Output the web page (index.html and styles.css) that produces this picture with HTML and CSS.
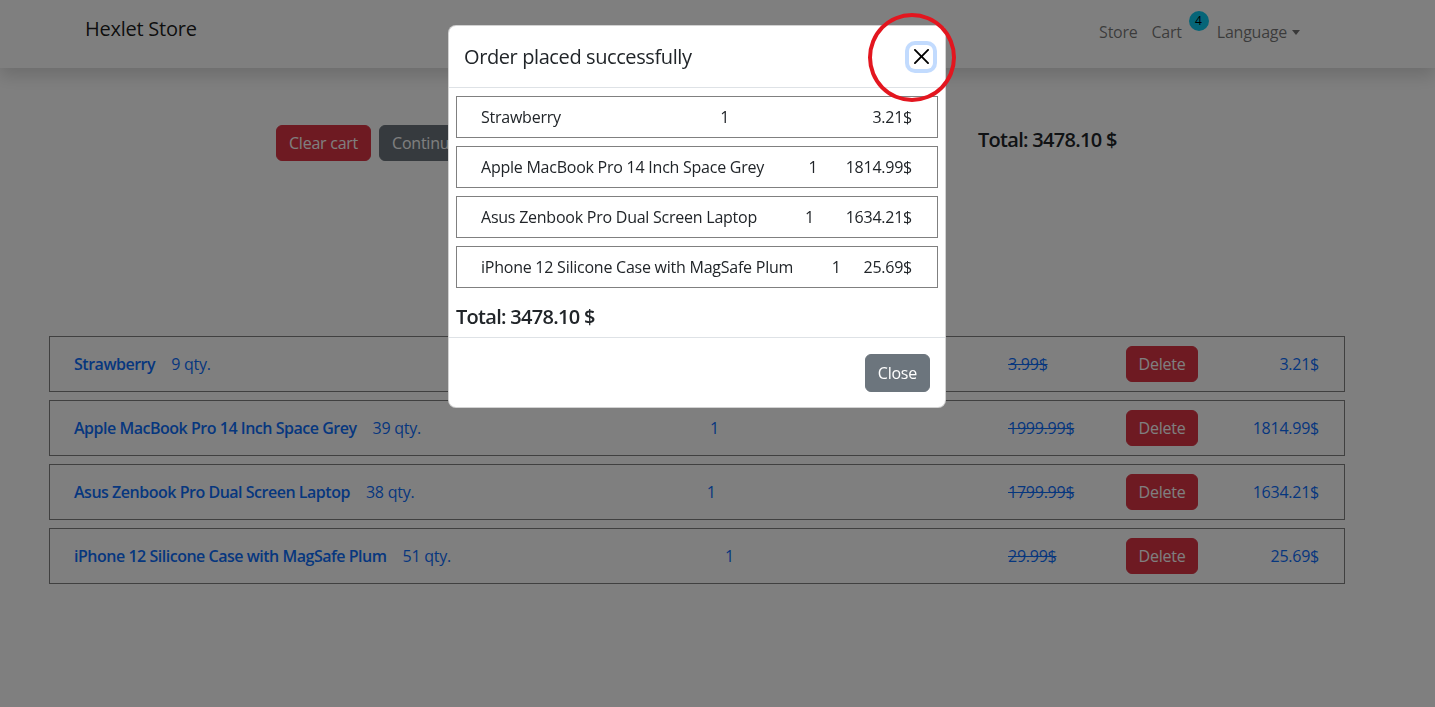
FILE: index.html
```html
<!DOCTYPE html>
<html lang="en">
<head>
<meta charset="utf-8">
<title>Hexlet Store</title>
<link rel="stylesheet" href="styles.css">
</head>
<body>
<nav class="navbar">
  <a class="brand" href="#">Hexlet Store</a>
  <ul class="nav">
    <li class="store-item"><a class="nav-link" href="#">Store</a></li>
    <li class="cart-item"><a class="nav-link" href="#">Cart</a><span class="badge">4</span></li>
    <li><a class="nav-link dropdown" href="#">Language</a></li>
  </ul>
</nav>

<main class="page">
  <div class="toolbar">
    <div class="actions">
      <button class="btn btn-danger">Clear cart</button>
      <button class="btn btn-secondary">Continue shopping</button>
    </div>
    <h5 class="total">Total: 3478.10 $</h5>
  </div>

  <div class="cart-list">
    <a class="cart-row" href="#">
      <span class="item-info"><span class="item-name">Strawberry</span><span class="item-stock">9 qty.</span></span>
      <span class="item-count">1</span>
      <span class="item-prices"><s class="old-price">3.99$</s><span class="btn btn-danger btn-delete">Delete</span><span class="new-price">3.21$</span></span>
    </a>
    <a class="cart-row" href="#">
      <span class="item-info"><span class="item-name">Apple MacBook Pro 14 Inch Space Grey</span><span class="item-stock">39 qty.</span></span>
      <span class="item-count">1</span>
      <span class="item-prices"><s class="old-price">1999.99$</s><span class="btn btn-danger btn-delete">Delete</span><span class="new-price">1814.99$</span></span>
    </a>
    <a class="cart-row" href="#">
      <span class="item-info"><span class="item-name">Asus Zenbook Pro Dual Screen Laptop</span><span class="item-stock">38 qty.</span></span>
      <span class="item-count">1</span>
      <span class="item-prices"><s class="old-price">1799.99$</s><span class="btn btn-danger btn-delete">Delete</span><span class="new-price">1634.21$</span></span>
    </a>
    <a class="cart-row" href="#">
      <span class="item-info"><span class="item-name">iPhone 12 Silicone Case with MagSafe Plum</span><span class="item-stock">51 qty.</span></span>
      <span class="item-count">1</span>
      <span class="item-prices"><s class="old-price">29.99$</s><span class="btn btn-danger btn-delete">Delete</span><span class="new-price">25.69$</span></span>
    </a>
  </div>
</main>

<div class="backdrop"></div>

<div class="modal">
  <div class="modal-header">
    <h5 class="modal-title">Order placed successfully</h5>
    <button class="btn-close" aria-label="Close">
      <svg viewBox="0 0 16 16" width="16" height="16"><path d="M.293.293a1 1 0 0 1 1.414 0L8 6.586 14.293.293a1 1 0 1 1 1.414 1.414L9.414 8l6.293 6.293a1 1 0 0 1-1.414 1.414L8 9.414l-6.293 6.293a1 1 0 0 1-1.414-1.414L6.586 8 .293 1.707a1 1 0 0 1 0-1.414z" fill="#000"/></svg>
    </button>
  </div>
  <div class="modal-body">
    <ul class="order-list">
      <li class="order-item"><span class="order-name">Strawberry</span><span class="order-count">1</span><span class="order-price">3.21$</span></li>
      <li class="order-item"><span class="order-name">Apple MacBook Pro 14 Inch Space Grey</span><span class="order-count">1</span><span class="order-price">1814.99$</span></li>
      <li class="order-item"><span class="order-name">Asus Zenbook Pro Dual Screen Laptop</span><span class="order-count">1</span><span class="order-price">1634.21$</span></li>
      <li class="order-item"><span class="order-name">iPhone 12 Silicone Case with MagSafe Plum</span><span class="order-count">1</span><span class="order-price">25.69$</span></li>
    </ul>
    <h5 class="modal-total">Total: 3478.10 $</h5>
  </div>
  <div class="modal-footer">
    <button class="btn btn-secondary btn-close-text">Close</button>
  </div>
</div>

<div class="annotation"></div>
</body>
</html>
```
FILE: styles.css
```css
* { box-sizing: border-box; }

html, body {
  margin: 0;
  height: 100%;
}

body {
  font-family: "Open Sans", "Noto Sans", "Liberation Sans", sans-serif;
  font-size: 16px;
  line-height: 1.5;
  letter-spacing: -0.015em;
  color: #212529;
  background: #fff;
  overflow: hidden;
}

/* Navbar */
.navbar {
  height: 68px;
  display: flex;
  justify-content: space-between;
  align-items: flex-start;
  padding: 14px 127px 0 85px;
  background: #fff;
  box-shadow: 0 8px 16px rgba(0, 0, 0, 0.15);
}

.brand {
  font-size: 20px;
  line-height: 30px;
  color: rgba(0, 0, 0, 0.9);
  text-decoration: none;
}

.nav {
  list-style: none;
  margin: 6px 0 0;
  padding: 0;
  display: flex;
}

.nav li { position: relative; }

.nav-link {
  display: block;
  padding: 0 8px;
  line-height: 24px;
  color: rgba(0, 0, 0, 0.55);
  text-decoration: none;
}

.store-item .nav-link { padding-right: 6px; }

.cart-item { margin-right: 19px; }

.badge {
  position: absolute;
  left: 45px;
  top: -9px;
  width: 20px;
  height: 20px;
  border-radius: 50%;
  background: #0dcaf0;
  color: #000;
  font-size: 12px;
  line-height: 20px;
  text-align: center;
  letter-spacing: 0;
}

.dropdown::after {
  content: "";
  display: inline-block;
  margin-left: 5px;
  vertical-align: 3px;
  border-top: 5px solid;
  border-left: 4px solid transparent;
  border-right: 4px solid transparent;
}

/* Page */
.page {
  padding: 57px 90px 0 49px;
}

.toolbar {
  display: flex;
  align-items: flex-start;
  margin-left: 227px;
  height: 36px;
}

.actions {
  display: flex;
  gap: 8px;
  width: 702px;
}

.btn {
  display: inline-flex;
  align-items: center;
  justify-content: center;
  height: 36px;
  padding: 0 12px;
  border: 1px solid transparent;
  border-radius: 6px;
  font-family: inherit;
  font-size: 16px;
  letter-spacing: -0.015em;
  color: #fff;
  cursor: pointer;
}

.btn-danger { background: #dc3545; border-color: #dc3545; }
.btn-secondary { background: #6c757d; border-color: #6c757d; }

.total, .modal-total {
  margin: 0;
  font-size: 20px;
  font-weight: 600;
  line-height: 24px;
  letter-spacing: -0.035em;
}

.total { margin-top: 3px; }

.cart-list {
  margin-top: 175px;
  display: flex;
  flex-direction: column;
  gap: 8px;
}

.cart-row {
  display: flex;
  justify-content: space-between;
  align-items: center;
  height: 56px;
  padding: 0 25px 0 24px;
  border: 1px solid #808080;
  color: #0d6efd;
  text-decoration: none;
}

.item-name {
  font-weight: 600;
  letter-spacing: -0.03em;
}

.item-stock { margin-left: 16px; }

.item-prices {
  display: flex;
  align-items: center;
}

.old-price { width: 118px; }

.btn-delete { width: 72px; }

.new-price {
  width: 121px;
  text-align: right;
}

/* Overlay */
.backdrop {
  position: fixed;
  inset: 0;
  background: rgba(0, 0, 0, 0.5);
}

.modal {
  position: absolute;
  left: 448px;
  top: 25px;
  width: 498px;
  background: #fff;
  border-radius: 8px;
  border: 1px solid rgba(0, 0, 0, 0.175);
}

.modal-header {
  display: flex;
  align-items: center;
  justify-content: space-between;
  height: 62px;
  padding: 0 12px 0 15px;
  border-bottom: 1px solid #dee2e6;
}

.modal-title {
  margin: 0;
  font-size: 20px;
  font-weight: 400;
  line-height: 30px;
  letter-spacing: -0.02em;
}

.btn-close {
  width: 24px;
  height: 24px;
  padding: 0;
  border: 0;
  border-radius: 6px;
  background: #fff;
  box-shadow: 0 0 0 4px rgba(13, 110, 253, 0.25);
  display: flex;
  align-items: center;
  justify-content: center;
}

.btn-close svg { width: 15px; height: 15px; }

.modal-body {
  padding: 8px 7px;
  height: 249px;
}

.order-list {
  list-style: none;
  margin: 0;
  padding: 0;
  display: flex;
  flex-direction: column;
  gap: 8px;
}

.order-item {
  display: flex;
  justify-content: space-between;
  align-items: center;
  height: 42px;
  padding: 0 25px 0 24px;
  border: 1px solid #808080;
}

.order-name { font-weight: 500; margin-right: 16px; }

.modal-total { margin-top: 17px; }

.modal-footer {
  display: flex;
  justify-content: flex-end;
  align-items: center;
  height: 70px;
  padding: 0 15px;
  border-top: 1px solid #dee2e6;
}

.btn-close-text { height: 38px; }

.annotation {
  position: absolute;
  left: 868px;
  top: 13px;
  width: 88px;
  height: 89px;
  border: 4px solid #e3161f;
  border-radius: 50%;
}
```
